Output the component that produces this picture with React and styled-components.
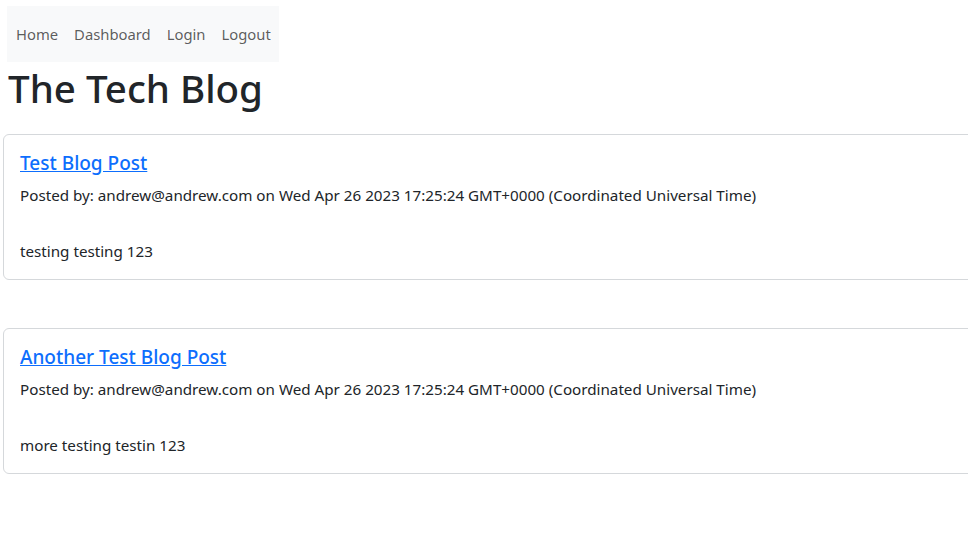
import React from 'react';
import styled, { createGlobalStyle } from 'styled-components';

const GlobalStyle = createGlobalStyle`
  body {
    margin: 0;
    background: #fff;
    color: #212529;
    font-family: "Noto Sans", "Open Sans", sans-serif;
    font-size: 16px;
    line-height: 1.5;
    overflow: hidden;
  }
`;

const Page = styled.div`
  padding: 6px 0 0 3px;
`;

const NavBar = styled.nav`
  display: inline-flex;
  align-items: center;
  margin-left: 4px;
  padding: 8px 0 8px 1px;
  background: #f8f9fa;
`;

const NavLink = styled.a`
  padding: 8px;
  color: rgba(0, 0, 0, 0.65);
  text-decoration: none;
  font-size: 14.8px;
  line-height: 24px;
`;

const Title = styled.h1`
  margin: 2px 0 22px 5px;
  font-size: 38.5px;
  font-weight: 500;
  line-height: 48px;
`;

const PostList = styled.div`
  display: flex;
  flex-direction: column;
  gap: 48px;
`;

const Card = styled.div`
  width: calc(100% + 40px);
  border: 1px solid #d5d8db;
  border-radius: 6px;
  padding: 16px;
  box-sizing: border-box;
`;

const PostTitle = styled.a`
  display: block;
  margin-bottom: 8px;
  color: #0d6efd;
  font-size: 19px;
  font-weight: 500;
  line-height: 24px;
  text-decoration: underline;
`;

const Meta = styled.p`
  margin: 0 0 32px;
  font-size: 15.2px;
  line-height: 24px;
`;

const Body = styled.p`
  margin: 0;
  font-size: 15.2px;
  line-height: 24px;
`;

const posts = [
  { title: 'Test Blog Post', body: 'testing testing 123' },
  { title: 'Another Test Blog Post', body: 'more testing testin 123' },
];

export default function App() {
  return (
    <Page>
      <GlobalStyle />
      <NavBar>
        <NavLink href="#">Home</NavLink>
        <NavLink href="#">Dashboard</NavLink>
        <NavLink href="#">Login</NavLink>
        <NavLink href="#">Logout</NavLink>
      </NavBar>
      <Title>The Tech Blog</Title>
      <PostList>
        {posts.map((p) => (
          <Card key={p.title}>
            <PostTitle href="#">{p.title}</PostTitle>
            <Meta>
              Posted by: andrew@andrew.com on Wed Apr 26 2023 17:25:24 GMT+0000 (Coordinated Universal Time)
            </Meta>
            <Body>{p.body}</Body>
          </Card>
        ))}
      </PostList>
    </Page>
  );
}
